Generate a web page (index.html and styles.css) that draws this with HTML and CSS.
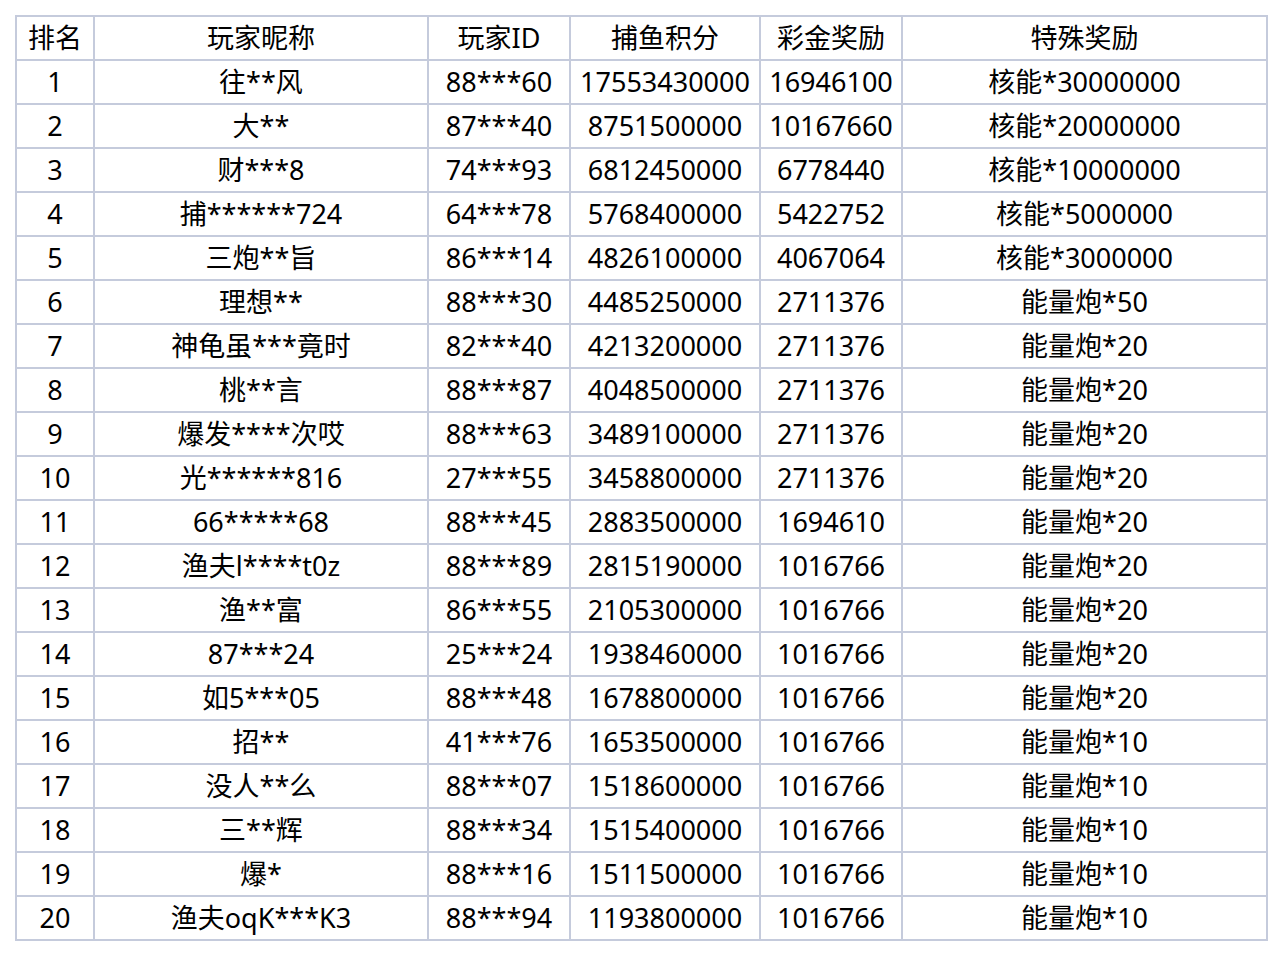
FILE: index.html
```html
<!DOCTYPE html>
<html lang="zh">
<head>
<meta charset="utf-8">
<link rel="stylesheet" href="styles.css">
</head>
<body>
<table class="rank">
<colgroup>
<col class="c1"><col class="c2"><col class="c3"><col class="c4"><col class="c5"><col class="c6">
</colgroup>
<tr><td>排名</td><td>玩家昵称</td><td>玩家ID</td><td>捕鱼积分</td><td>彩金奖励</td><td>特殊奖励</td></tr>
<tr><td>1</td><td>往**风</td><td>88***60</td><td>17553430000</td><td>16946100</td><td>核能*30000000</td></tr>
<tr><td>2</td><td>大**</td><td>87***40</td><td>8751500000</td><td>10167660</td><td>核能*20000000</td></tr>
<tr><td>3</td><td>财***8</td><td>74***93</td><td>6812450000</td><td>6778440</td><td>核能*10000000</td></tr>
<tr><td>4</td><td>捕******724</td><td>64***78</td><td>5768400000</td><td>5422752</td><td>核能*5000000</td></tr>
<tr><td>5</td><td>三炮**旨</td><td>86***14</td><td>4826100000</td><td>4067064</td><td>核能*3000000</td></tr>
<tr><td>6</td><td>理想**</td><td>88***30</td><td>4485250000</td><td>2711376</td><td>能量炮*50</td></tr>
<tr><td>7</td><td>神龟虽***竟时</td><td>82***40</td><td>4213200000</td><td>2711376</td><td>能量炮*20</td></tr>
<tr><td>8</td><td>桃**言</td><td>88***87</td><td>4048500000</td><td>2711376</td><td>能量炮*20</td></tr>
<tr><td>9</td><td>爆发****次哎</td><td>88***63</td><td>3489100000</td><td>2711376</td><td>能量炮*20</td></tr>
<tr><td>10</td><td>光******816</td><td>27***55</td><td>3458800000</td><td>2711376</td><td>能量炮*20</td></tr>
<tr><td>11</td><td>66*****68</td><td>88***45</td><td>2883500000</td><td>1694610</td><td>能量炮*20</td></tr>
<tr><td>12</td><td>渔夫l****t0z</td><td>88***89</td><td>2815190000</td><td>1016766</td><td>能量炮*20</td></tr>
<tr><td>13</td><td>渔**富</td><td>86***55</td><td>2105300000</td><td>1016766</td><td>能量炮*20</td></tr>
<tr><td>14</td><td>87***24</td><td>25***24</td><td>1938460000</td><td>1016766</td><td>能量炮*20</td></tr>
<tr><td>15</td><td>如5***05</td><td>88***48</td><td>1678800000</td><td>1016766</td><td>能量炮*20</td></tr>
<tr><td>16</td><td>招**</td><td>41***76</td><td>1653500000</td><td>1016766</td><td>能量炮*10</td></tr>
<tr><td>17</td><td>没人**么</td><td>88***07</td><td>1518600000</td><td>1016766</td><td>能量炮*10</td></tr>
<tr><td>18</td><td>三**辉</td><td>88***34</td><td>1515400000</td><td>1016766</td><td>能量炮*10</td></tr>
<tr><td>19</td><td>爆*</td><td>88***16</td><td>1511500000</td><td>1016766</td><td>能量炮*10</td></tr>
<tr><td>20</td><td>渔夫oqK***K3</td><td>88***94</td><td>1193800000</td><td>1016766</td><td>能量炮*10</td></tr>
</table>
</body>
</html>
```
FILE: styles.css
```css
html, body {
  margin: 0;
  padding: 0;
  background: #ffffff;
}
body {
  padding: 15px;
  font-family: "Noto Sans", "Noto Sans CJK SC", sans-serif;
  color: #000000;
}
.rank {
  border-collapse: collapse;
  table-layout: fixed;
  width: 1253px;
  font-size: 27px;
}
.rank td {
  border: 2px solid #c5cbdc;
  height: 41px;
  padding: 0 0 1px 0;
  text-align: center;
  vertical-align: middle;
  white-space: nowrap;
  line-height: 41px;
}
.c1 { width: 78px; }
.c2 { width: 334px; }
.c3 { width: 142px; }
.c4 { width: 190px; }
.c5 { width: 142px; }
.c6 { width: 365px; }
```
